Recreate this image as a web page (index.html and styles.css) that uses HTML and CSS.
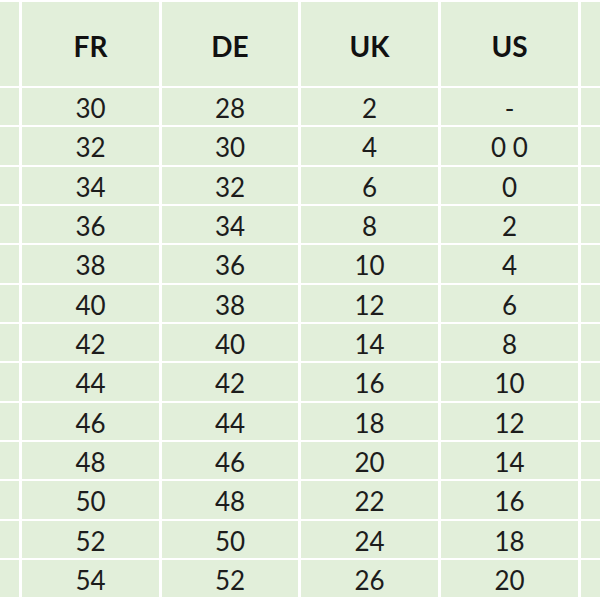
FILE: index.html
```html
<!DOCTYPE html>
<html>
<head>
<meta charset="utf-8">
<link rel="stylesheet" href="styles.css">
</head>
<body>
<div class="sheet">
  <div class="cell head"></div><div class="cell head">FR</div><div class="cell head">DE</div><div class="cell head">UK</div><div class="cell head">US</div><div class="cell head"></div>
  <div class="cell"></div><div class="cell">30</div><div class="cell">28</div><div class="cell">2</div><div class="cell">-</div><div class="cell"></div>
  <div class="cell"></div><div class="cell">32</div><div class="cell">30</div><div class="cell">4</div><div class="cell">0 0</div><div class="cell"></div>
  <div class="cell"></div><div class="cell">34</div><div class="cell">32</div><div class="cell">6</div><div class="cell">0</div><div class="cell"></div>
  <div class="cell"></div><div class="cell">36</div><div class="cell">34</div><div class="cell">8</div><div class="cell">2</div><div class="cell"></div>
  <div class="cell"></div><div class="cell">38</div><div class="cell">36</div><div class="cell">10</div><div class="cell">4</div><div class="cell"></div>
  <div class="cell"></div><div class="cell">40</div><div class="cell">38</div><div class="cell">12</div><div class="cell">6</div><div class="cell"></div>
  <div class="cell"></div><div class="cell">42</div><div class="cell">40</div><div class="cell">14</div><div class="cell">8</div><div class="cell"></div>
  <div class="cell"></div><div class="cell">44</div><div class="cell">42</div><div class="cell">16</div><div class="cell">10</div><div class="cell"></div>
  <div class="cell"></div><div class="cell">46</div><div class="cell">44</div><div class="cell">18</div><div class="cell">12</div><div class="cell"></div>
  <div class="cell"></div><div class="cell">48</div><div class="cell">46</div><div class="cell">20</div><div class="cell">14</div><div class="cell"></div>
  <div class="cell"></div><div class="cell">50</div><div class="cell">48</div><div class="cell">22</div><div class="cell">16</div><div class="cell"></div>
  <div class="cell"></div><div class="cell">52</div><div class="cell">50</div><div class="cell">24</div><div class="cell">18</div><div class="cell"></div>
  <div class="cell"></div><div class="cell">54</div><div class="cell">52</div><div class="cell">26</div><div class="cell">20</div><div class="cell"></div>
</div>
</body>
</html>
```
FILE: styles.css
```css
html, body {
  margin: 0;
  padding: 0;
  background: #ffffff;
}
.sheet {
  display: grid;
  grid-template-columns: 19px 137px 136px 137px 137px 1fr;
  grid-template-rows: 84px repeat(13, 37.33px);
  column-gap: 3px;
  row-gap: 2px;
  padding-top: 2px;
  width: 600px;
  height: 600px;
  overflow: hidden;
  font-family: Lato, "Open Sans", sans-serif;
  font-size: 26px;
  color: #1c1c1c;
}
.cell {
  background: #e2efda;
  display: flex;
  align-items: center;
  justify-content: center;
  padding-top: 3px;
  box-sizing: border-box;
  line-height: 1;
}
.head {
  font-weight: 700;
  font-size: 28px;
  color: #111111;
  padding-top: 4px;
}
```
